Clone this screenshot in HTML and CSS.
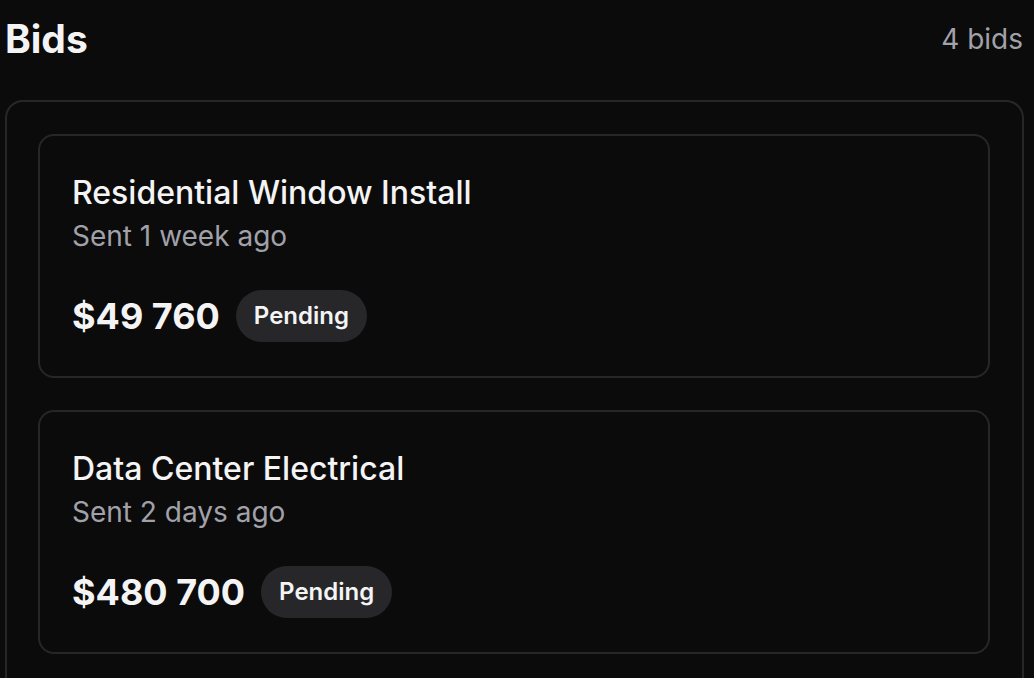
FILE: index.html
```html
<!DOCTYPE html>
<html lang="en">

<head>
  <meta charset="UTF-8">
  <meta name="viewport" content="width=device-width, initial-scale=1.0">
  <title>Bids</title>

  <link rel="stylesheet" href="styles.css">
</head>

<body>
  <div class="page">
    <!-- Header with the count of bids -->
    <div class="bids-header">
      <h1>Bids</h1>
      <span class="bids-count">4 bids</span>
    </div>

    <!-- List of sent bids -->
    <div class="bids-panel">
      <div class="bid-card">
        <div class="bid-title">Residential Window Install</div>
        <div class="bid-sent">Sent 1 week ago</div>
        <div class="bid-footer">
          <span class="bid-amount">$49 760</span>
          <span class="bid-status">Pending</span>
        </div>
      </div>

      <div class="bid-card">
        <div class="bid-title">Data Center Electrical</div>
        <div class="bid-sent">Sent 2 days ago</div>
        <div class="bid-footer">
          <span class="bid-amount">$480 700</span>
          <span class="bid-status">Pending</span>
        </div>
      </div>
    </div>
  </div>
</body>

</html>
```

FILE: styles.css
```css
/* Page */
body {
  margin: 0;
  background-color: #0c0b0b;
  color: #f4f4f5;
  font-family: Inter, "Noto Sans", sans-serif;
  overflow: hidden;
}

.page {
  padding: 19px 10px 0 5px;
}

/* Header */
.bids-header {
  display: flex;
  align-items: center;
  justify-content: space-between;
  margin-bottom: 41px;
}

.bids-header h1 {
  margin: 0;
  font-size: 39px;
  line-height: 40px;
  font-weight: 700;
}

.bids-count {
  font-size: 28px;
  line-height: 40px;
  color: #a1a1aa;
  padding-right: 1px;
}

/* Panel that holds the cards */
.bids-panel {
  display: flex;
  flex-direction: column;
  gap: 32px;
  padding: 32px 32px 40px 31px;
  border: 2px solid #27272a;
  border-radius: 18px;
}

.bid-card {
  padding: 35px 32px 34px 32px;
  border: 2px solid #27272a;
  border-radius: 16px;
}

.bid-title {
  font-size: 32px;
  line-height: 44px;
  font-weight: 500;
}

.bid-sent {
  margin-top: 1px;
  font-size: 28px;
  line-height: 40px;
  color: #a1a1aa;
}

.bid-footer {
  display: flex;
  align-items: center;
  gap: 16px;
  margin-top: 34px;
}

.bid-amount {
  font-size: 36px;
  line-height: 40px;
  font-weight: 700;
}

.bid-status {
  display: inline-block;
  padding: 0 18px;
  height: 52px;
  line-height: 52px;
  border-radius: 26px;
  background-color: #27272a;
  font-size: 24px;
  font-weight: 600;
}
```
